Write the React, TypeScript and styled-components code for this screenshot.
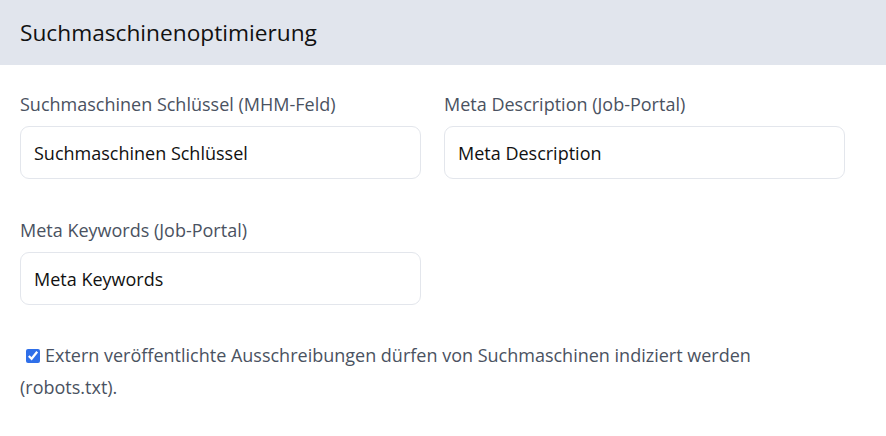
import React from "react";
import styled, { createGlobalStyle } from "styled-components";

const Global = createGlobalStyle`
  * { box-sizing: border-box; }
  body { margin: 0; background: #fff; font-family: "Open Sans", "Noto Sans", sans-serif; }
`;

const Card = styled.section`
  width: 886px;
  background: #fff;
`;

const Header = styled.header`
  height: 65px;
  background: #e1e5ed;
  display: flex;
  align-items: center;
  padding: 0 20px;
  font-size: 22.7px;
  color: #111;
`;

const Body = styled.div`
  padding: 26px 20px 30px 20px;
`;

const Grid = styled.div`
  display: grid;
  grid-template-columns: 401px 401px;
  column-gap: 23px;
  row-gap: 38px;
`;

const Field = styled.div`
  display: flex;
  flex-direction: column;
  gap: 9px;
`;

const Label = styled.label`
  font-size: 18px;
  line-height: 26px;
  color: #4a5261;
`;

const Input = styled.input`
  height: 53px;
  width: 100%;
  border: 1px solid #e3e6ec;
  border-radius: 9px;
  padding: 0 13px;
  font-family: inherit;
  font-size: 18px;
  color: #111;
  outline: none;
  &::placeholder { color: #111; }
`;

const Check = styled.p`
  margin: 34px 0 0 0;
  max-width: 825px;
  font-size: 18px;
  line-height: 32px;
  color: #4a5261;
`;

const Box = styled.input`
  width: 14px;
  height: 14px;
  margin: 0 5px 0 6px;
  vertical-align: -1px;
  accent-color: #2f6fe9;
`;

export default function App() {
  return (
    <>
      <Global />
      <Card>
        <Header>Suchmaschinenoptimierung</Header>
        <Body>
          <Grid>
            <Field>
              <Label>Suchmaschinen Schlüssel (MHM-Feld)</Label>
              <Input placeholder="Suchmaschinen Schlüssel" />
            </Field>
            <Field>
              <Label>Meta Description (Job-Portal)</Label>
              <Input placeholder="Meta Description" />
            </Field>
            <Field>
              <Label>Meta Keywords (Job-Portal)</Label>
              <Input placeholder="Meta Keywords" />
            </Field>
          </Grid>
          <Check>
            <Box type="checkbox" defaultChecked />
            Extern veröffentlichte Ausschreibungen dürfen von Suchmaschinen indiziert werden (robots.txt).
          </Check>
        </Body>
      </Card>
    </>
  );
}
